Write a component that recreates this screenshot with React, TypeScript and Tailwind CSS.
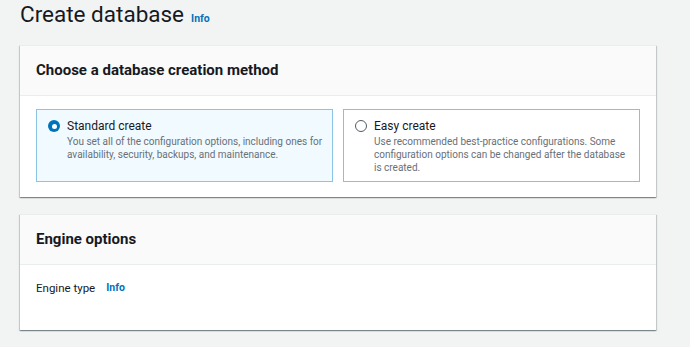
const font = { fontFamily: 'Roboto, "Liberation Sans", sans-serif' }

function Radio({ checked }: { checked: boolean }) {
  return checked ? (
    <span className="mt-[3px] flex size-[12px] shrink-0 items-center justify-center rounded-full bg-[#0073bb]">
      <span className="size-[5px] rounded-full bg-white" />
    </span>
  ) : (
    <span className="mt-[3px] size-[12px] shrink-0 rounded-full border-[1.5px] border-[#545b64] bg-white" />
  )
}

function Tile({ title, desc, checked }: { title: string; desc: string; checked: boolean }) {
  return (
    <div
      className={
        checked
          ? "flex h-[73px] flex-1 gap-[7px] border border-[#8cc4e6] bg-[#f1faff] pl-[11px] pr-[8px] pt-[7px]"
          : "flex h-[73px] flex-1 gap-[7px] border border-[#aab7b8] bg-white pl-[11px] pr-[8px] pt-[7px]"
      }
    >
      <Radio checked={checked} />
      <div>
        <div className="text-[12px] leading-[18px] text-[#16191f]">{title}</div>
        <div className="text-[10px] leading-[13px] text-[#687078]">{desc}</div>
      </div>
    </div>
  )
}

function Card({ title, children }: { title: string; children: React.ReactNode }) {
  return (
    <div className="border-t border-[#eaeded] bg-white shadow-[0_1px_1px_0_rgba(0,28,36,0.3),1px_1px_1px_0_rgba(0,28,36,0.15),-1px_1px_1px_0_rgba(0,28,36,0.15)]">
      <div className="flex h-[50px] items-center border-b border-[#eaeded] bg-[#fafafa] px-[16px]">
        <h2 className="text-[15px] font-bold text-[#16191f]">{title}</h2>
      </div>
      {children}
    </div>
  )
}

export default function App() {
  return (
    <div style={font} className="h-[347px] w-[690px] overflow-hidden bg-[#f2f3f3] pl-[20px] pr-[34px]">
      <div className="flex h-[45px] items-start gap-[7px]">
        <h1 className="mt-[-1px] text-[22.5px] leading-[30px] text-[#16191f]">Create database</h1>
        <span className="mt-[12px] text-[10.5px] leading-[14px] font-bold text-[#0073bb]">Info</span>
      </div>
      <Card title="Choose a database creation method">
        <div className="flex gap-[10px] px-[16px] pb-[15px] pt-[13px]">
          <Tile
            checked
            title="Standard create"
            desc="You set all of the configuration options, including ones for availability, security, backups, and maintenance."
          />
          <Tile
            checked={false}
            title="Easy create"
            desc="Use recommended best-practice configurations. Some configuration options can be changed after the database is created."
          />
        </div>
      </Card>
      <div className="h-[17px]" />
      <Card title="Engine options">
        <div className="h-[65px] px-[16px] pt-[15px]">
          <div className="flex items-center gap-[11px]">
            <span className="text-[11.5px] leading-[16px] text-[#16191f]">Engine type</span>
            <span className="text-[10.5px] leading-[16px] font-bold text-[#0073bb]">Info</span>
          </div>
        </div>
      </Card>
    </div>
  )
}
